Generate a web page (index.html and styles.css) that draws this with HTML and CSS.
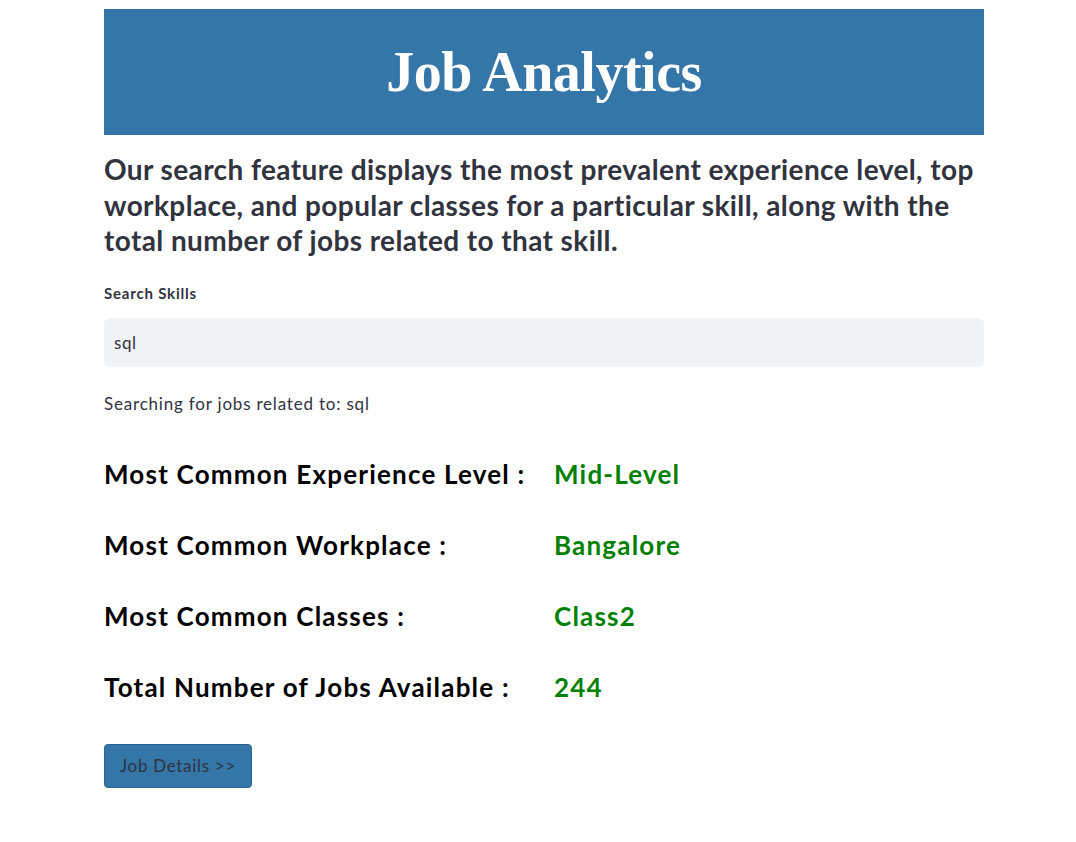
FILE: index.html
```html
<!DOCTYPE html>
<html lang="en">
<head>
<meta charset="utf-8">
<title>Job Analytics</title>
<link rel="stylesheet" href="styles.css">
</head>
<body>
<main class="page">
  <header class="banner">
    <h1 class="banner-title">Job Analytics</h1>
  </header>
  <h3 class="intro">Our search feature displays the most prevalent experience level, top workplace, and popular classes for a particular skill, along with the total number of jobs related to that skill.</h3>
  <label class="field-label" for="skill">Search Skills</label>
  <div class="input-box"><input id="skill" class="input" type="text" value="sql"></div>
  <p class="status">Searching for jobs related to: sql</p>
  <dl class="stats">
    <dt class="stat-label">Most Common Experience Level :</dt>
    <dd class="stat-value">Mid-Level</dd>
    <dt class="stat-label">Most Common Workplace :</dt>
    <dd class="stat-value">Bangalore</dd>
    <dt class="stat-label">Most Common Classes :</dt>
    <dd class="stat-value">Class2</dd>
    <dt class="stat-label">Total Number of Jobs Available :</dt>
    <dd class="stat-value">244</dd>
  </dl>
  <button class="btn" type="button">Job Details &gt;&gt;</button>
</main>
</body>
</html>
```
FILE: styles.css
```css
* { box-sizing: border-box; }
html, body { margin: 0; padding: 0; background: #fff; }
body {
  font-family: "Lato", "Noto Sans", sans-serif;
  color: #31333f;
}
.page {
  width: 880px;
  margin: 0 0 0 104px;
  padding: 9px 0 40px;
  display: flex;
  flex-direction: column;
}
.banner {
  background: #3476a8;
  height: 126px;
  display: flex;
  align-items: center;
  justify-content: center;
}
.banner-title {
  margin: 0;
  color: #fff;
  font-family: "Liberation Serif", "Times New Roman", serif;
  font-weight: 700;
  font-size: 56px;
  letter-spacing: -0.5px;
  line-height: 1;
}
.intro {
  margin: 17px 0 0;
  font-size: 28px;
  font-weight: 700;
  line-height: 35.5px;
  letter-spacing: 0.4px;
}
.field-label {
  margin-top: 24px;
  font-size: 15px;
  font-weight: 700;
  line-height: 20px;
  letter-spacing: 0.8px;
}
.input-box {
  margin-top: 15px;
  height: 49px;
  background: #f0f2f6;
  border-radius: 6px;
  display: flex;
  align-items: center;
  padding: 0 10px;
}
.input {
  border: 0;
  outline: 0;
  background: transparent;
  font: inherit;
  font-size: 17px;
  letter-spacing: 0.6px;
  color: #31333f;
  width: 100%;
  padding: 0;
}
.status {
  margin: 25px 0 0;
  font-size: 17px;
  font-weight: 400;
  line-height: 24px;
  letter-spacing: 0.8px;
}
.stats {
  margin: 41px 0 0;
  display: grid;
  grid-template-columns: 450px 1fr;
  row-gap: 37px;
}
.stat-label, .stat-value {
  margin: 0;
  font-size: 26px;
  font-weight: 700;
  line-height: 34px;
  letter-spacing: 1.2px;
}
.stat-label { color: #000; }
.stat-value { color: #008000; }
.btn {
  align-self: flex-start;
  margin-top: 40px;
  width: 148px;
  height: 44px;
  background: #3476a8;
  border: 1px solid #2a6592;
  border-radius: 4px;
  color: #31333f;
  font-family: inherit;
  font-size: 17px;
  font-weight: 400;
  letter-spacing: 0.7px;
  padding: 0;
}
```
